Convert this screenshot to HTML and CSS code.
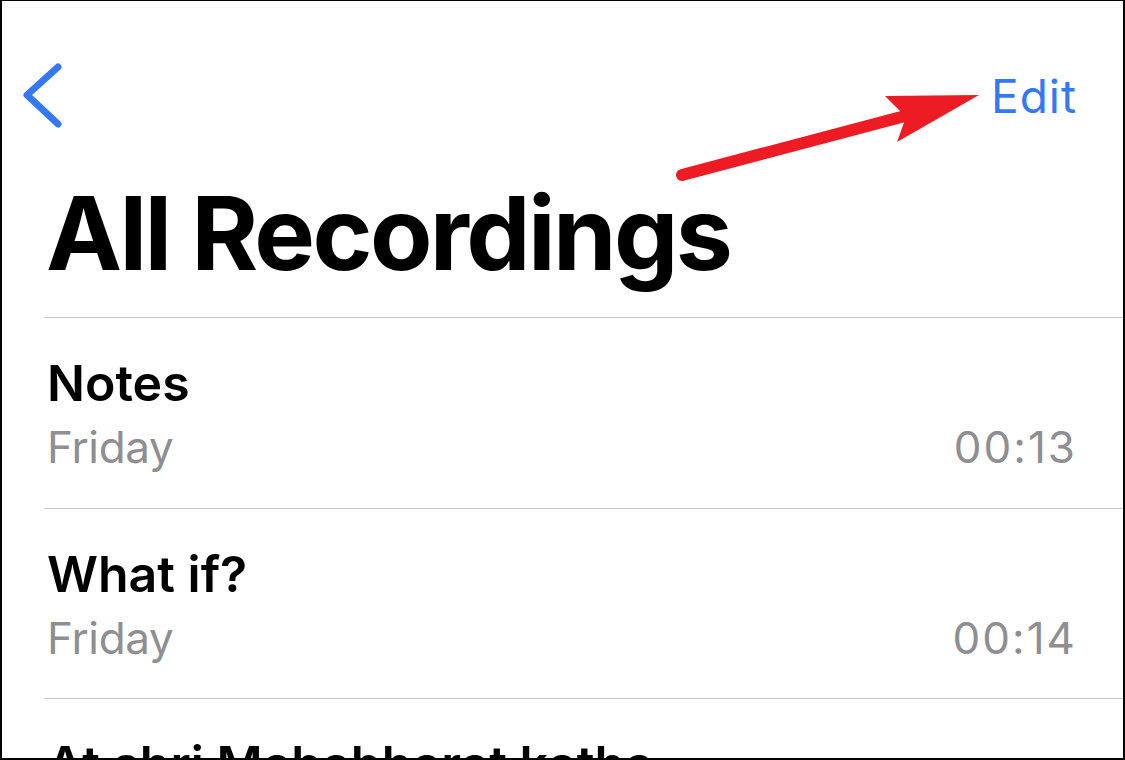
FILE: index.html
```html
<!DOCTYPE html>
<html>
<head>
<meta charset="utf-8">
<link rel="stylesheet" href="styles.css">
</head>
<body>
<div class="frame">
  <div class="nav">
    <svg class="back" width="46" height="72" viewBox="0 0 46 72">
      <path d="M38 8 L7 36 L38 65" fill="none" stroke="#3478f6" stroke-width="7" stroke-linecap="round" stroke-linejoin="round"/>
    </svg>
    <div class="edit">Edit</div>
  </div>
  <h1 class="title">All Recordings</h1>
  <div class="list">
    <div class="row">
      <div class="name">Notes</div>
      <div class="meta"><span>Friday</span><span class="dur">00:13</span></div>
    </div>
    <div class="row">
      <div class="name">What if?</div>
      <div class="meta"><span>Friday</span><span class="dur">00:14</span></div>
    </div>
    <div class="row">
      <div class="name">At shri Mahabharat katha</div>
    </div>
  </div>
  <svg class="annot" width="1125" height="760" viewBox="0 0 1125 760">
    <line x1="682" y1="175" x2="905" y2="116" stroke="#ed1c24" stroke-width="12" stroke-linecap="round"/>
    <polygon points="885,96 979,95 897,142 906,117" fill="#ed1c24"/>
  </svg>
</div>
</body>
</html>
```
FILE: styles.css
```css
html, body {
  margin: 0;
  padding: 0;
  background: #fff;
}
.frame {
  position: relative;
  width: 1125px;
  height: 760px;
  box-sizing: border-box;
  border-top: 1px solid #000;
  border-left: 2px solid #000;
  border-right: 2px solid #000;
  border-bottom: 2px solid #000;
  overflow: hidden;
  font-family: Inter, "Noto Sans", sans-serif;
  color: #000;
}
.nav {
  height: 172px;
  display: flex;
  justify-content: space-between;
  align-items: flex-start;
}
.back {
  display: block;
  margin-left: 18px;
  margin-top: 58px;
}
.edit {
  margin-top: 67px;
  margin-right: 46px;
  font-size: 46px;
  line-height: 56px;
  letter-spacing: 1px;
  color: #3478f6;
}
.title {
  margin: 0;
  height: 144px;
  padding-left: 44px;
  font-size: 102px;
  line-height: 120px;
  font-weight: 700;
  letter-spacing: -2.6px;
}
.list {
  margin-left: 42px;
}
.row {
  box-sizing: border-box;
  height: 190.5px;
  border-top: 1px solid #c6c6c8;
  padding: 35px 48px 0 3px;
}
.name {
  font-size: 50px;
  line-height: 60px;
  font-weight: 600;
  white-space: nowrap;
}
.meta {
  margin-top: 8px;
  display: flex;
  justify-content: space-between;
  font-size: 44px;
  line-height: 52px;
  color: #8e8e93;
  letter-spacing: -0.3px;
}
.dur {
  letter-spacing: 2px;
  margin-right: -2px;
}
.annot {
  position: absolute;
  left: -2px;
  top: -1px;
  pointer-events: none;
}
```
